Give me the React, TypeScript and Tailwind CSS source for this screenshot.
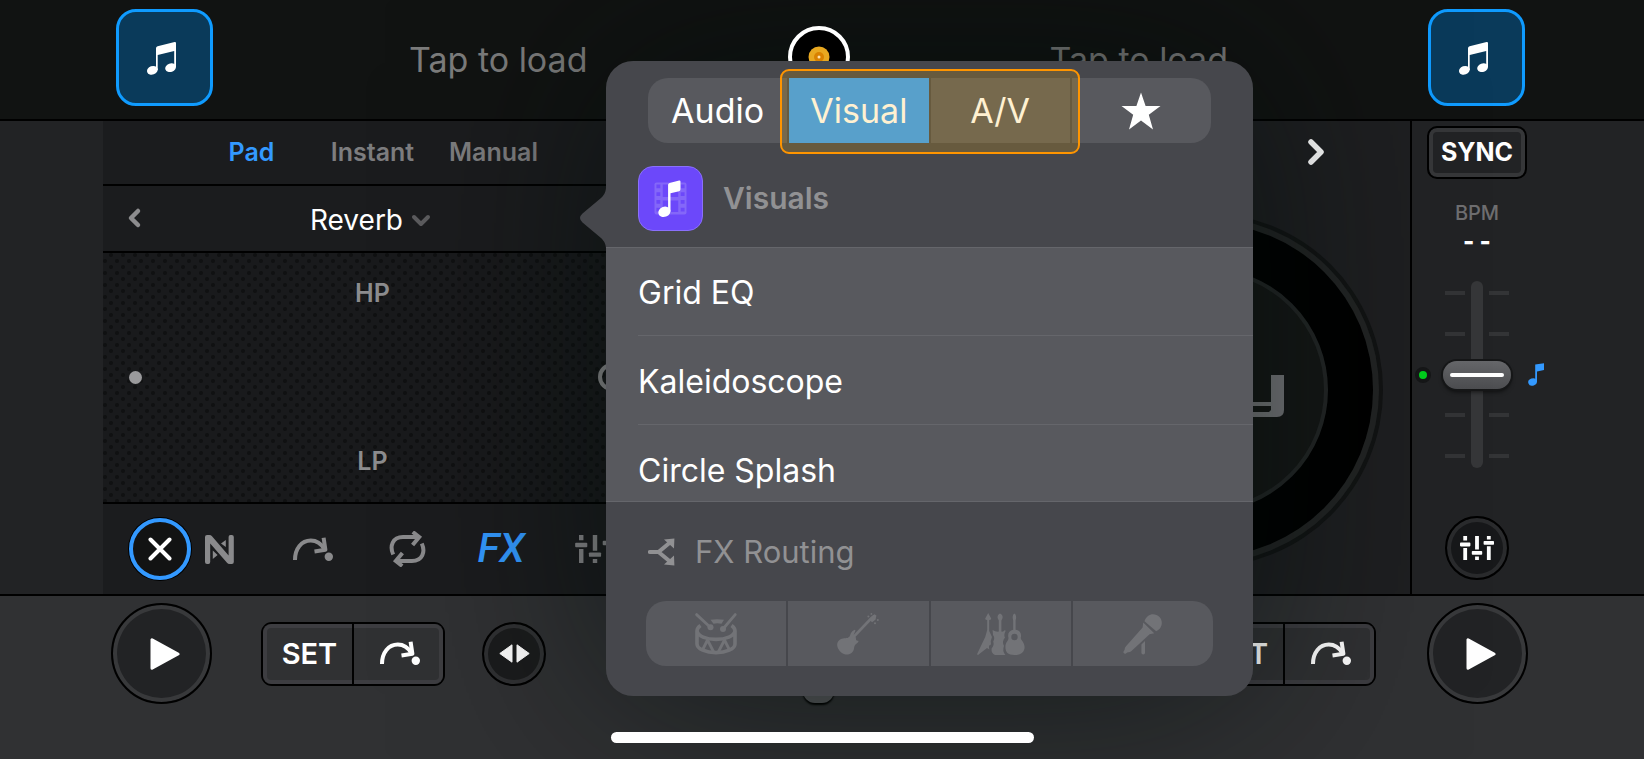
import type { ReactNode } from "react";

type IconProps = { className?: string };

function BeamedNotes() {
  return (
    <svg viewBox="0 0 29 33" className="h-[33px] w-[29px] fill-white" aria-hidden="true">
      <path d="M9 6.2Q9 4.6 10.6 4.2L27.6.1Q29 -.1 29 1V25H27.2V9L10.7 13V28H9Z" />
      <ellipse cx="5.4" cy="28.3" rx="5.5" ry="4.2" transform="rotate(-20 5.4 28.3)" />
      <ellipse cx="23.6" cy="25.7" rx="5.5" ry="4.2" transform="rotate(-20 23.6 25.7)" />
    </svg>
  );
}

function CueArrow({ className = "" }: IconProps) {
  return (
    <svg viewBox="0 0 40 25" className={`h-[25px] w-10 fill-none stroke-current ${className}`} strokeWidth="4" aria-hidden="true">
      <path d="M2 23C2 11.5 8.5 3.6 17.8 3.6C23.5 3.6 28 6.4 31.5 12.3" />
      <path d="M30.6 .8L32.4 12.8L21.5 14.4" strokeLinejoin="round" />
      <circle cx="35.8" cy="19.8" r="4.2" className="fill-current" stroke="none" />
    </svg>
  );
}

function FaderIcon({ className = "h-6 w-[34px]" }: IconProps) {
  return (
    <svg viewBox="0 0 34 24" className={`fill-current ${className}`} aria-hidden="true">
      <path d="M3.3 0h3.8v4.6H3.3zM3.3 12h3.8v12H3.3zM15.1 0h3.8v13.4h-3.8zM15.1 20.5h3.8V24h-3.8zM26.9 0h3.8v3.4h-3.8zM26.9 10.2h3.8V24h-3.8z" />
      <rect x="0" y="6.6" width="10.4" height="3.8" rx=".8" />
      <rect x="11.8" y="14.9" width="10.4" height="3.8" rx=".8" />
      <rect x="23.6" y="4.9" width="10.4" height="3.8" rx=".8" />
    </svg>
  );
}

function LoopIcon() {
  return (
    <svg viewBox="0 0 37 36" className="h-9 w-[37px] fill-none stroke-current" strokeWidth="4" aria-hidden="true">
      <path d="M4.2 23.5C.4 15 3.5 5.9 14 5.9H29M23.8 1L30.2 6L23.6 14" />
      <path d="M32.8 12.5C36.6 21 33.5 30.1 23 30.1H8M13.2 35L6.8 30L13.4 22" />
    </svg>
  );
}

function NeuralIcon() {
  return (
    <svg viewBox="0 0 29 29" className="size-[29px] fill-current" aria-hidden="true">
      <path d="M0 2Q0 0 2 0H4.4Q6 0 7 1.2L23.6 20.4V2Q23.6 0 25.4 0H26.8Q28.8 0 28.8 2V27Q28.8 29 26.8 29H24.6Q23 29 22 27.8L5.200 8.600V27Q5.200 29 3.400 29H2Q0 29 0 27Z" />
      <path d="M20.8 5V12L16 8.4ZM7.8 15.5L12.6 20L7.8 24Z" />
    </svg>
  );
}

function PlayIcon() {
  return (
    <svg viewBox="0 0 36 34" className="h-[34px] w-9 fill-white stroke-white" strokeWidth="3" strokeLinejoin="round" aria-hidden="true">
      <path d="M8 2.8V31.2L34 17Z" />
    </svg>
  );
}

function Chevron({ d, className = "" }: { d: string; className?: string }) {
  return (
    <svg viewBox="0 0 20 28" className={`h-7 w-5 fill-none stroke-current ${className}`} strokeLinecap="round" strokeLinejoin="round" aria-hidden="true">
      <path d={d} />
    </svg>
  );
}

function DrumIcon() {
  return (
    <svg viewBox="0 0 42 42" className="size-[42px] fill-none stroke-current" aria-hidden="true">
      <path d="M1.6 1.6L15 14M40.2 1.6L28 16" strokeWidth="2.8" strokeLinecap="round" />
      <circle cx="15.5" cy="14.3" r="3" className="fill-current" stroke="none" />
      <circle cx="28" cy="16" r="3" className="fill-current" stroke="none" />
      <path d="M15.500 6.800Q22 5.600 29 6.800L26.5 10.8Q22 9.800 18.500 10.8Z" className="fill-current" stroke="none" />
      <path d="M5.5 12.5Q2 15 2 18V31C2 36 11 39.6 21 39.6S40 36 40 31V18Q40 15 36.5 12.5M2 18C3 23 11 26.4 21 26.4S39 23 40 18" strokeWidth="3.6" />
      <path d="M7.500 37L12.500 27L18.700 39M23.300 39L29.500 27L34.500 37" strokeWidth="2.8" strokeLinejoin="round" />
    </svg>
  );
}

function GuitarIcon() {
  return (
    <svg viewBox="0 0 42 42" className="size-[42px] fill-current" aria-hidden="true">
      <path d="M13 22.5C14 19 16.5 17 18 16.8C19 17 18 18.8 17.2 20.5C16.4 22.4 17 23.2 18.2 23.8L19 24.8C18.6 27 19.4 28 21 27.8C22 27.7 21.3 29.3 20 30.2C17 32 17.4 34 16.8 36.5C16 40 12 42 8.6 41.4C4 40.6 .4 36 .2 32.2C0 28.5 2.4 26 6 25.4C9.5 25 12 25.4 13 22.5Z" />
      <path d="M16 24.5L34.6 5" stroke="currentColor" strokeWidth="2.6" />
      <path d="M33 7.6L34.2 3.6L37.4 1.2L39.4 2.6L38.6 6.4L35.2 9.2Z" />
      <circle cx="31.4" cy="3.6" r="1" />
      <circle cx="34.4" cy=".9" r=".9" />
      <circle cx="38" cy="10.2" r="1" />
      <circle cx="40.8" cy="7" r="1" />
    </svg>
  );
}

function GuitarsIcon() {
  return (
    <svg viewBox="0 0 48 42" className="h-[42px] w-12 fill-current" aria-hidden="true">
      <path d="M11.2 0L14.2 5.4Q14 7 12.2 7V18L15 24Q13 28 14 31.5Q11 32 12.4 36.4L10 35L1 42L0 41.2L8.2 24L10.2 17V7Q8.2 7 8.2 5.4Z" />
      <path d="M23 .4Q26 1.6 25.6 5L24.4 7.4V18.6Q26.4 19 28 17L28.6 18Q26.4 22 28 24.6Q24.6 28.4 27 33Q25 38 28.4 42H18Q14 40.6 14.6 35.6Q17.6 32 16.2 28.6Q18.4 24.6 16 22L15.6 17Q18.6 19 21.8 18.6V7.4L20.6 5Q20.2 1.6 23 .4Z" />
      <path fillRule="evenodd" d="M37.4 .4Q39.6 1.4 39 5.6L38.6 7.4V16.8C43 17.4 44.8 20.6 43.8 24.6C43.4 27 47.6 29 47.6 34C47.6 39 44 42 37.4 42S28.4 39 28.4 34C28.4 29 32 27.4 31.4 24.6C30.4 20.4 32.4 17.4 36.2 16.8V7.4L35.8 5.6Q35.2 1.4 37.4 .4ZM37.5 20.8A3.2 3.2 0 1 0 37.5 27.2A3.2 3.2 0 1 0 37.5 20.8Z" />
    </svg>
  );
}

function MicIcon() {
  return (
    <svg viewBox="0 0 40 42" className="h-[42px] w-10 fill-current" aria-hidden="true">
      <path d="M21.500 8.200C23 3.500 26.500 1.200 30 1.200C35 1.200 38.800 5 38.800 10C38.800 13.500 36.500 16.800 33.200 18.200Z" />
      <path d="M20.2 9.6L31.2 20.2L26.6 21.2L8.2 38.2Q6.6 39.6 4.8 39.2L2 41L.2 39.2L1.6 36.8Q1.6 34.6 3 33.2L19.6 14.6Z" />
      <path d="M18.4 31.4L22 28V39.8Q22 41.4 20.2 41.4T18.4 39.8Z" />
    </svg>
  );
}

function RoutingIcon() {
  return (
    <svg viewBox="0 0 27 28" className="h-7 w-[27px] fill-current" aria-hidden="true">
      <path d="M1.8 14H10.5L22 4.5M10.5 14L22 23.5" fill="none" stroke="currentColor" strokeWidth="4" strokeLinecap="round" />
      <path d="M16 1.6L26.4 .4L26 10.4ZM16 26.4L26.4 27.6L26 17.6Z" />
    </svg>
  );
}

function VisualsIcon() {
  return (
    <svg viewBox="0 0 65 65" className="size-full" aria-hidden="true">
      <rect x="16" y="16" width="33" height="33" rx="2" className="fill-[#8467f9]" />
      <g className="fill-[#6c48fa]">
        <path d="M18 18h4v4h-4zM18 26h4v4h-4zM18 34h4v4h-4zM18 42h4v4h-4zM43 18h4v4h-4zM43 26h4v4h-4zM43 34h4v4h-4zM43 42h4v4h-4z" />
        <path d="M24.5 18h16v13h-16zM24.5 34.5h16v12h-16z" />
      </g>
      <g className="fill-white">
        <path d="M30 18.4Q30 16.8 31.6 16.4L41.4 14Q42.8 13.8 42.8 15V23Q42.8 24.6 41.4 25L32.5 27.2V46H30Z" />
        <ellipse cx="26.2" cy="46.2" rx="6.4" ry="5.2" transform="rotate(-20 26.2 46.2)" />
      </g>
    </svg>
  );
}

function Artwork({ label }: { label: string }) {
  return (
    <button
      type="button"
      aria-label={label}
      className="flex size-[97px] shrink-0 items-center justify-center rounded-[20px] border-[3px] border-[#0f9bff] bg-[#0a3a5a] pt-0.5 pr-1.5"
    >
      <BeamedNotes />
    </button>
  );
}

function RoundButton({ label, className, children }: { label: string; className: string; children: ReactNode }) {
  return (
    <button
      type="button"
      aria-label={label}
      className={`flex shrink-0 items-center justify-center rounded-full border-2 border-black text-white ${className}`}
    >
      {children}
    </button>
  );
}

function CueGroup() {
  return (
    <div className="grid h-16 w-[184px] shrink-0 grid-cols-[1fr_2px_1fr] rounded-[11px] border-2 border-black text-white">
      <button type="button" className="rounded-l-lg border-4 border-r-0 border-[#414245]/80 text-[29px] font-semibold">
        SET
      </button>
      <div className="bg-black" />
      <button
        type="button"
        aria-label="Set cue jump"
        className="flex items-center justify-center rounded-r-lg border-4 border-l-0 border-[#414245]/80 pl-1.5"
      >
        <CueArrow />
      </button>
    </div>
  );
}

function Segment({ label, children, className = "bg-[#58595e]" }: { label: string; children: ReactNode; className?: string }) {
  return (
    <button type="button" aria-label={label} className={`flex flex-1 items-center justify-center ${className}`}>
      {children}
    </button>
  );
}

const effects = ["Grid EQ", "Kaleidoscope", "Circle Splash"];

function Popover() {
  return (
    <section
      aria-label="Effect picker"
      className="absolute top-[61px] left-[606px] z-30 w-[647px] rounded-[27px] bg-[#46474c]"
    >
      <svg viewBox="0 0 27 60" className="absolute top-[127px] right-full h-[60px] w-[27px] fill-[#46474c]" aria-hidden="true">
        <path d="M27 0C26.500 5 25 7 22 10L3.500 25.500Q-1.500 30 3.500 34.500L22 50C25 53 26.500 55 27 60Z" />
      </svg>

      <div className="mx-[42px] pt-[17px]">
        <div className="flex h-[65px] gap-0.5 overflow-hidden rounded-[20px] text-[34px] text-white">
          <Segment label="Audio">Audio</Segment>
          <Segment label="Visual" className="bg-[#339cf7]">Visual</Segment>
          <Segment label="A/V">A/V</Segment>
          <Segment label="Favorites">
            <svg viewBox="0 0 40 38" className="h-[38px] w-10 fill-white" aria-hidden="true">
              <path d="M20 .5L24.600 14H39.500L27.800 22.700L32 37.500L20 28.600L8 37.500L12.200 22.700L.5 14H15.400Z" />
            </svg>
          </Segment>
        </div>
      </div>
      <div className="pointer-events-none absolute top-2 left-[174px] h-[85px] w-[300px] rounded-[9px] border-2 border-[#ff9500] bg-[#ffb000]/18" />

      <div className="mt-[23px] mb-4 flex items-center gap-5 px-8">
        <div className="size-[65px] overflow-hidden rounded-[15px] border border-[#8a70fb] bg-[#6c48fa]">
          <VisualsIcon />
        </div>
        <h2 className="text-[30px] font-semibold text-[#919193]">Visuals</h2>
      </div>

      <ul className="h-[255px] overflow-hidden border-b border-[#65666b] bg-[#58595e] shadow-[inset_0_1px_0_#65666b]">
        {effects.map((name) => (
          <li key={name} className="pl-8">
            <button type="button" className="flex h-[89px] w-full items-center border-b border-[#65666b] pt-1 text-left text-[32px] text-white">
              {name}
            </button>
          </li>
        ))}
      </ul>

      <div className="mt-[34px] flex h-8 items-center gap-5 pl-[42px] text-[#919193]">
        <RoutingIcon />
        <h2 className="text-[31px]">FX Routing</h2>
      </div>
      <div className="mx-10 mt-[33px] pb-[30px]">
        <div className="flex h-[65px] gap-0.5 overflow-hidden rounded-[20px] text-[#727377]">
          <Segment label="Drums"><DrumIcon /></Segment>
          <Segment label="Bass"><GuitarIcon /></Segment>
          <Segment label="Harmonic"><GuitarsIcon /></Segment>
          <Segment label="Vocals"><MicIcon /></Segment>
        </div>
      </div>
    </section>
  );
}

function PopoverShade() {
  return (
    <div className="pointer-events-none absolute top-[61px] left-[606px] z-10 h-[635px] w-[647px] rounded-[27px] shadow-[0_0_200px_rgba(2,12,10,0.6)]" />
  );
}

function EffectsPanel() {
  return (
    <section className="flex w-[543px] shrink-0 flex-col bg-[#1b1c1e]">
      <div className="flex h-[65px] justify-center border-b-2 border-black pr-1 text-[25px] font-semibold text-[#7d7d7f]">
        <div className="grid w-[363px] grid-cols-3">
          <button type="button" className="text-[#3399ff]">Pad</button>
          <button type="button">Instant</button>
          <button type="button">Manual</button>
        </div>
      </div>
      <div className="flex h-[67px] items-center border-b-2 border-black">
        <button type="button" aria-label="Previous effect" className="flex w-16 justify-center text-[#8c8c8e]">
          <Chevron d="M13 7L6 14L13 21" className="stroke-[4.500]" />
        </button>
        <button type="button" className="flex flex-1 items-center justify-center gap-2 pt-1 pr-2 text-[28px] text-white">
          Reverb
          <Chevron d="M3 11L10 18L17 11" className="stroke-[4] text-[#5c5c5e]" />
        </button>
        <div className="w-16" />
      </div>
      <div className="flex h-[252px] items-center border-b-2 border-black bg-[#191a1c] bg-[radial-gradient(circle_at_2px_8px,#101112_1.500px,transparent_2.500px),radial-gradient(circle_at_8px_2px,#101112_1.500px,transparent_2.500px)] bg-[length:12px_12px] text-[25px] font-semibold text-[#8c8c8e]">
        <div className="flex w-16 justify-center">
          <div className="size-[13px] rounded-full bg-[#9a9a9c]" />
        </div>
        <div className="flex flex-1 flex-col items-center justify-between self-stretch py-[22px]">
          <span>HP</span>
          <span>LP</span>
        </div>
        <div className="flex w-[68px] justify-center">
          <div className="size-7 rounded-full border-4 border-[#8c8c8e]" />
        </div>
      </div>
      <div className="flex h-[90px] items-center gap-[5px] overflow-hidden pl-[26px] text-[#8a8a8c]">
        <button
          type="button"
          aria-label="Close effects"
          className="flex size-[62px] shrink-0 items-center justify-center rounded-full border-4 border-[#3399ff] bg-[#121313] text-white ring-1 ring-black"
        >
          <svg viewBox="0 0 24 24" className="size-6 fill-none stroke-current stroke-[4]" strokeLinecap="round" aria-hidden="true">
            <path d="M2.500 2.500L21.500 21.500M21.500 2.500L2.500 21.500" />
          </svg>
        </button>
        <div className="flex items-center gap-12">
          <button type="button" aria-label="Neural mix" className="flex w-[46px] shrink-0 justify-center"><NeuralIcon /></button>
          <button type="button" aria-label="Cue points" className="flex w-[46px] shrink-0 justify-center"><CueArrow /></button>
          <button type="button" aria-label="Loop" className="flex w-[46px] shrink-0 justify-center"><LoopIcon /></button>
          <button type="button" className="flex w-[46px] shrink-0 justify-center font-['Roboto',sans-serif] text-[41px] font-medium text-[#3399ff] italic">FX</button>
          <button type="button" aria-label="Equalizer" className="flex w-[46px] shrink-0 justify-center"><FaderIcon className="h-7 w-10" /></button>
        </div>
      </div>
    </section>
  );
}

function Turntable() {
  return (
    <section className="flex w-1/4 flex-col border-r-2 border-black bg-[#1e1f21]">
      <div className="flex h-[65px] items-center justify-end pr-[83px] pb-1">
        <button type="button" aria-label="Next" className="text-white">
          <Chevron d="M4 4L14 14L4 24" className="stroke-[5.500]" />
        </button>
      </div>
      <div className="flex flex-1 items-center justify-center">
        <svg viewBox="0 0 354 354" className="size-[354px] shrink-0" aria-hidden="true">
          <circle cx="177" cy="177" r="177" className="fill-[#121414]" />
          <circle cx="177" cy="177" r="173" className="fill-[#222424]" />
          <circle cx="177" cy="177" r="167" className="fill-black" />
          <circle cx="177" cy="177" r="120" className="fill-[#151716] stroke-[#232626]" strokeWidth="4" />
          <path
            className="fill-[#77787b]"
            d="M205 162V189H242V162H255V197Q255 204 248 204H205V199H240L242 197V193H205Z"
          />
        </svg>
      </div>
    </section>
  );
}

function Tick() {
  return (
    <div className="flex justify-between">
      <div className="h-1 w-5 bg-[#333436]" />
      <div className="h-1 w-5 bg-[#333436]" />
    </div>
  );
}

function PitchColumn() {
  return (
    <section className="flex w-[232px] shrink-0 flex-col items-start bg-[#222325] pl-[15px]">
      <button
        type="button"
        className="mt-[5px] h-[53px] w-[100px] rounded-[10px] border-2 border-black text-[25px] font-bold text-white shadow-[inset_0_0_0_4px_#363739]"
      >
        SYNC
      </button>
      <div className="mt-6 w-[100px] text-center text-xl leading-5 font-medium text-[#6e6e70]">BPM</div>
      <div className="mt-[7px] w-[100px] text-center text-2xl leading-6 font-extrabold text-white">- -</div>
      <div className="mt-[27px] flex items-center">
        <div className="-ml-3 size-4 rounded-full border-4 border-[#161718] bg-[#00cf1d]" />
        <div className="relative ml-[11px] flex h-[187px] w-[70px] items-center justify-center">
          <div className="h-full w-3 rounded-full bg-[#363739]" />
          <div className="absolute inset-x-[3px] inset-y-2.5 flex flex-col justify-between">
            <Tick />
            <Tick />
            <div className="h-1" />
            <Tick />
            <Tick />
          </div>
          <div className="absolute flex h-7 w-[68px] items-center justify-center rounded-full bg-linear-to-b from-[#66676a] to-[#4c4d50] shadow-[0_0_0_2px_#161718,0_3px_4px_rgba(0,0,0,0.6)]">
            <div className="h-1 w-[54px] rounded-full bg-white" />
          </div>
          <input
            type="range"
            aria-label="Tempo"
            className="absolute inset-0 h-full w-full opacity-0 [writing-mode:vertical-lr]"
          />
        </div>
        <svg viewBox="0 0 16 23" className="ml-4 h-[23px] w-4 fill-[#3399ff]" aria-hidden="true">
          <path d="M7.200 1.500L16 .3V7L9 8.500V19H7.200Z" />
          <ellipse cx="4.600" cy="19" rx="4.400" ry="3.600" transform="rotate(-20 4.600 19)" />
        </svg>
      </div>
      <div className="mt-12 flex w-[100px] justify-center">
        <RoundButton label="Mixer" className="size-16 bg-[#17181a] shadow-[inset_0_0_0_4px_#2a2b2d]">
          <FaderIcon />
        </RoundButton>
      </div>
    </section>
  );
}

export default function App() {
  return (
    <div className="relative flex min-h-screen flex-col overflow-hidden bg-[#303133] font-['Inter','Roboto',sans-serif]">
      <header className="flex h-[121px] items-start border-b-2 border-black bg-[#111312] pt-[9px] pr-[119px] pl-[116px]">
        <Artwork label="Load left track" />
        <button type="button" className="flex h-[101px] flex-1 items-center justify-center pr-1 text-[34px] text-[#7c7c7c]">Tap to load</button>
        <svg viewBox="0 0 62 62" className="relative z-20 mt-[17px] mr-1 size-[62px] shrink-0" aria-label="Library">
          <circle cx="31" cy="31" r="29" className="fill-black stroke-white" strokeWidth="4" />
          <circle cx="31" cy="31" r="10.500" className="fill-[#e8a820]" />
          <circle cx="31" cy="31" r="5" className="fill-[#d98200]" />
          <circle cx="31" cy="31" r="1.500" className="fill-[#ffe2ae]" />
        </svg>
        <button type="button" className="flex h-[101px] flex-1 items-center justify-center pr-1 text-[34px] text-[#7c7c7c]">Tap to load</button>
        <Artwork label="Load right track" />
      </header>

      <main className="flex h-[475px] border-b-2 border-black">
        <div className="w-[103px] shrink-0 bg-[#222325]" />
        <EffectsPanel />
        <div className="flex-1 bg-[#1b1c1e]" />
        <Turntable />
        <PitchColumn />
      </main>

      <footer className="flex flex-1 flex-col items-center">
        <div className="flex w-full items-center pt-[7px] pr-[116px] pl-[111px]">
          <RoundButton label="Play left deck" className="size-[101px] bg-[#222325] shadow-[inset_0_0_0_4px_#38393b]">
            <PlayIcon />
          </RoundButton>
          <div className="ml-[49px] flex flex-1 items-center justify-between">
            <CueGroup />
            <RoundButton label="Beat jump left" className="ml-[37px] size-16 bg-[#1b1c1d] shadow-[inset_0_0_0_4px_#303133]">
              <svg viewBox="0 0 31 19" className="h-[19px] w-[31px] fill-current stroke-current" strokeWidth="1" strokeLinejoin="round" aria-hidden="true">
                <path d="M13 .8V18.200L.8 9.500ZM18 .8V18.200L30.200 9.500Z" />
              </svg>
            </RoundButton>
            <div className="flex flex-1 justify-center self-stretch">
              <div className="h-[99px] w-[31px] rounded-xl bg-[#56575a] shadow-[0_2px_2px_#000]" />
            </div>
            <RoundButton label="Beat jump right" className="mr-[37px] size-16 bg-[#1b1c1d] shadow-[inset_0_0_0_4px_#303133]">
              <span className="size-4" />
            </RoundButton>
            <CueGroup />
          </div>
          <RoundButton label="Play right deck" className="ml-[51px] size-[101px] bg-[#222325] shadow-[inset_0_0_0_4px_#38393b]">
            <PlayIcon />
          </RoundButton>
        </div>
        <div className="relative z-20 mt-7 mb-4 h-[11px] w-[423px] rounded-full bg-white" />
      </footer>

      <PopoverShade />
      <Popover />
    </div>
  );
}
